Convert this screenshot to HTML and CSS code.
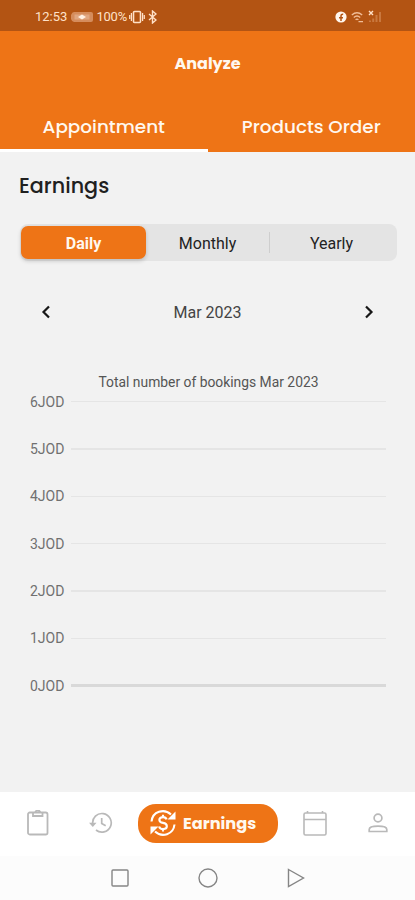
FILE: index.html
```html
<!DOCTYPE html>
<html lang="en">
<head>
<meta charset="utf-8">
<meta name="viewport" content="width=device-width, initial-scale=1">
<title>Analyze</title>
<link rel="stylesheet" href="styles.css">
</head>
<body>
<div class="status">
  <div class="status-left">
    <span class="clock">12:53</span>
    <svg class="battery" width="24" height="12" viewBox="0 0 24 12"><path d="M4 1h17q2 0 2 2v6q0 2-2 2H4Q2 11 1 8V4Q2 1 4 1z" fill="#d58c5c"/><path d="M4.500 3.500h15v5h-15z" fill="#e0a680"/><path d="m8 6 4-2.500 4 2.500-4 2.500z" fill="#fff0e2"/></svg>
    <span class="percent">100%</span>
    <svg class="vibrate" width="16" height="14" viewBox="0 0 16 14" fill="none" stroke="#ffe1c8" stroke-width="1.6"><rect x="4.5" y="1.5" width="7" height="11" rx="1"/><path d="M2.4 3v8M.7 5v4M13.6 3v8M15.3 5v4" stroke-width="1.2"/></svg>
    <svg class="bluetooth" width="9" height="14" viewBox="0 0 9 14" fill="none" stroke="#ffe1c8" stroke-width="1.4"><path d="m1 4 7 6-3.5 3V1L8 4l-7 6"/></svg>
  </div>
  <div class="status-right">
    <svg width="12" height="12" viewBox="0 0 12 12"><circle cx="6" cy="6" r="5.6" fill="#fff6ee"/><path d="M6 10V5q0-2 2.2-1.8M4 6.7h4" fill="none" stroke="#b35413" stroke-width="1.5"/></svg>
    <svg width="13" height="12" viewBox="0 0 13 12" fill="none" stroke="#f0bd98" stroke-width="1.3"><path d="M.8 4q5.2-4.6 10.400 0M2.8 6.4q3.2-2.8 6.4 0M4.6 8.8q1.4-1.2 2.8 0M7.5 10.700h4.500"/></svg>
    <svg width="14" height="13" viewBox="0 0 14 13"><path d="M1 1l4 4M5 1 1 5" stroke="#ffe1c8" stroke-width="1.4"/><path d="M1 12V10.500h2V12zM4.200 12V8.500h2V12zM7.500 12V5h2v7zM11 12V2h2v10z" fill="#c9783f"/></svg>
  </div>
</div>
<header class="header">
  <h1 class="title">Analyze</h1>
  <div class="tabs">
    <div class="tab tab-active">Appointment</div>
    <div class="tab">Products Order</div>
  </div>
</header>
<main class="main">
  <h2 class="heading">Earnings</h2>
  <div class="segments">
    <div class="segment selected">Daily</div>
    <div class="segment">Monthly</div>
    <div class="divider"></div>
    <div class="segment yearly">Yearly</div>
  </div>
  <div class="month">
    <svg width="10" height="16" viewBox="0 0 10 16"><path d="M8 2.500 2.500 8 8 13.500" fill="none" stroke="#171717" stroke-width="2.200"/></svg>
    <span>Mar 2023</span>
    <svg width="10" height="16" viewBox="0 0 10 16"><path d="M2 2.500 7.500 8 2 13.500" fill="none" stroke="#171717" stroke-width="2.200"/></svg>
  </div>
  <section class="chart">
    <div class="chart-title">Total number of bookings Mar 2023</div>
    <div class="rows">
      <div class="row"><span>6JOD</span><i></i></div>
      <div class="row"><span>5JOD</span><i></i></div>
      <div class="row"><span>4JOD</span><i></i></div>
      <div class="row"><span>3JOD</span><i></i></div>
      <div class="row"><span>2JOD</span><i></i></div>
      <div class="row"><span>1JOD</span><i></i></div>
      <div class="row base"><span>0JOD</span><i></i></div>
    </div>
  </section>
</main>
<nav class="nav">
  <svg class="clipboard" width="22" height="26" viewBox="0 0 22 26" fill="none" stroke="#b9b9b9" stroke-width="1.8"><rect x="1" y="2.500" width="19.500" height="22" rx="1.800"/><path d="M6 2.500v3.500h9.500V2.500M8.300 3a2.500 2.500 0 0 1 5 0"/></svg>
  <svg class="history" width="24" height="22" viewBox="0 0 24 22" fill="none" stroke="#b9b9b9" stroke-width="1.700"><path d="M3.700 12A9.300 9.300 0 1 1 7 18"/><path d="M12.700 6v5.500l4 2.300"/><path d="M0 10.800h7.500L3.800 15z" fill="#b9b9b9" stroke="none"/></svg>
  <div class="pill">
    <svg width="28" height="28" viewBox="0 0 28 28" fill="none" stroke="#fff" stroke-width="2.100"><path d="M2.500 12.500C3.500 2.500 15-1 22 5.500M25.500 15.500C24.500 25.500 13 29 6 22.500"/><path d="M26.500 2.500v8h-8zM1.500 25.500v-8h8z" fill="#fff" stroke="none"/><path d="M17.600 10.300q-.8-2.200-3.500-2.200c-5 0-5 5.100 0 5.800 5 .8 5 6.200 0 6.200q-3.300 0-4-2.700M14 5.800v2.500M14 20v2.500"/></svg>
    <span>Earnings</span>
  </div>
  <svg class="calendar" width="24" height="26" viewBox="0 0 24 26" fill="none" stroke="#b9b9b9" stroke-width="1.600"><rect x="1" y="3" width="22" height="22" rx="1.500"/><path d="M1 9.500h22M4.500 1v2M19.500 1v2"/></svg>
  <svg class="person" width="20" height="20" viewBox="0 0 20 20" fill="none" stroke="#b9b9b9" stroke-width="1.700"><circle cx="10" cy="5" r="3.900"/><path d="M1.200 18.500v-2c0-4.400 17.600-4.400 17.600 0v2z"/></svg>
</nav>
<div class="system">
  <svg width="18" height="18" viewBox="0 0 18 18"><rect x="1" y="1" width="16" height="16" rx="1"/></svg>
  <svg width="20" height="20" viewBox="0 0 20 20"><circle cx="10" cy="10" r="9"/></svg>
  <svg width="18" height="20" viewBox="0 0 18 20"><path d="M1.500 1.500 16.500 10 1.500 18.500z"/></svg>
</div>
</body>
</html>
```
FILE: styles.css
```css
* { box-sizing: border-box; }
body { margin: 0; width: 415px; height: 900px; display: flex; flex-direction: column; overflow: hidden; background: #f2f2f2; font-family: Roboto, sans-serif; color: #222; }
svg { display: block; flex: none; }
span { white-space: nowrap; }

.status { height: 31px; flex: none; background: #b35413; color: #ffe1c8; display: flex; justify-content: space-between; align-items: center; padding: 2px 33px 0 35px; font-size: 13px; }
.status-left, .status-right { display: flex; align-items: center; }
.battery { margin: 0 2px 0 3px; }
.percent { letter-spacing: -0.2px; }
.vibrate { margin: 0 3px 0 2px; }
.status-right { gap: 4px; }

.header { height: 121px; flex: none; background: #ee7416; color: #fff8ef; font-family: Poppins, Inter, sans-serif; display: flex; flex-direction: column; justify-content: space-between; }
.title { margin: 21px 0 0; height: 24px; line-height: 24px; text-align: center; font-size: 16px; font-weight: 700; }
.tabs { display: flex; height: 52px; }
.tab { flex: 1; text-align: center; font-size: 18.4px; font-weight: 500; line-height: 24px; padding: 15px 0 0; }
.tab-active { border-bottom: 3px solid #fff; }

.main { flex: 1; padding: 20px 18px 0 20px; display: flex; flex-direction: column; }
.heading { margin: 0 0 0 -1px; height: 28px; line-height: 28px; font-family: Poppins, Inter, sans-serif; font-size: 20.7px; font-weight: 500; color: #202020; }
.segments { margin-top: 24px; height: 37px; border-radius: 8px; background: #e4e4e4; padding: 2px 2px 2px 1px; display: flex; align-items: center; font-size: 16px; }
.segment { flex: 1; height: 33px; line-height: 35px; text-align: center; }
.yearly { padding-right: 2px; }
.selected { flex: 0 0 125px; background: #ee7416; color: #fff8ef; font-weight: 700; border-radius: 7px; box-shadow: 0 2px 4px rgba(0, 0, 0, 0.18); }
.divider { width: 1px; height: 21px; background: #cecece; }
.month { margin: 39px 6px 0 1px; height: 24px; padding: 0 17px 0 20px; display: flex; align-items: center; justify-content: space-between; font-size: 16px; color: #444; }
.chart { margin-top: 49px; }
.chart-title { height: 18px; line-height: 18px; text-align: center; font-size: 13.85px; color: #555; }
.rows { margin: 1px 11px 0 10px; }
.row { height: 19px; margin-bottom: 28.4px; display: flex; align-items: center; font-size: 14px; color: #707070; }
.row span { width: 41px; }
.row i { flex: 1; height: 1.500px; background: #e5e5e5; }
.base i { height: 3px; background: #d9d9d9; }

.nav { height: 64px; flex: none; background: #fff; display: flex; align-items: center; padding: 0 0 2px 27px; }
.history { margin-left: 40px; }
.pill { width: 140px; height: 39px; margin-left: 25px; border-radius: 18px; background: #ee7416; color: #fff8ef; display: flex; align-items: center; gap: 6px; padding-left: 11px; font-family: Poppins, Inter, sans-serif; font-size: 16.2px; font-weight: 700; }
.calendar { margin-left: 25px; }
.person { margin-left: 41px; }
.system { height: 44px; flex: none; background: #fcfcfc; display: flex; align-items: center; justify-content: space-between; padding: 0 110px 1px 111px; }
.system svg { fill: none; stroke: #858585; stroke-width: 1.4; }
```
